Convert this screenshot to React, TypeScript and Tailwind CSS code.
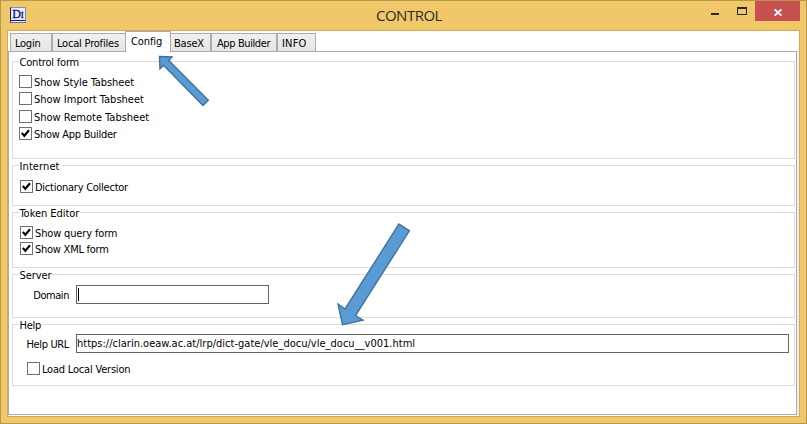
import type { ReactNode } from "react";

function Check({ label, checked = false, className = "", textClass = "" }: { label: string; checked?: boolean; className?: string; textClass?: string }) {
  return (
    <label className={`flex h-[13px] items-center gap-[2px] ${className}`}>
      <span className="h-[13px] w-[13px] shrink-0 border border-[#707070] bg-white">
        {checked && (
          <svg width="11" height="11" viewBox="0 0 11 11" className="block">
            <path d="M1.8 4.8 L4.3 7.8 L9 2.2" fill="none" stroke="#000" strokeWidth="2.1" />
          </svg>
        )}
      </span>
      <span className={`pt-[2px] whitespace-nowrap ${textClass}`}>{label}</span>
    </label>
  );
}

function Group({ title, className, titleClass = "", children }: { title: string; className: string; titleClass?: string; children: ReactNode }) {
  return (
    <section className={`relative shrink-0 border border-[#dcdcdc] ${className}`}>
      <h2 className={`absolute -top-[6px] left-[6px] bg-white pr-px pl-[0.5px] leading-[14px] whitespace-nowrap ${titleClass}`}>{title}</h2>
      {children}
    </section>
  );
}

function Tab({ label, className }: { label: string; className: string }) {
  return (
    <div className={`h-[18px] shrink-0 border border-b-0 border-[#acacac] bg-linear-to-b from-[#f0f0f0] to-[#e5e5e5] pt-[2px] leading-[15px] whitespace-nowrap ${className}`}>
      {label}
    </div>
  );
}

export default function App() {
  return (
    <div className="relative flex h-[424px] w-[807px] flex-col overflow-hidden border border-[#b6974f] bg-[#f0c869] px-[6px] pb-[6px] font-['DejaVu_Sans_Condensed','DejaVu_Sans',sans-serif] text-[11px] leading-[13px] tracking-[-0.1px] text-black">
      <header className="flex h-[29px] shrink-0 items-start">
        <div className="mt-[6px] ml-[3px] h-[16px] w-[16px] shrink-0 border border-[#8590c0] border-b-[#6670a8] border-l-[#18186c] bg-[#e9edfa]">
          <div className="h-[13px] border-b border-[#18186c] text-center font-['Liberation_Serif',serif] text-[12px] leading-[12px] font-medium tracking-[-0.2px] text-[#12126c] [-webkit-text-stroke:0.3px_#12126c]">
            D<span className="text-[9px]">I</span>
          </div>
        </div>
        <h1 className="ml-[350px] w-[70px] pt-[4px] font-['Open_Sans',sans-serif] text-[15px] leading-[21px] tracking-[-0.5px] text-[#2b2b2b]">CONTROL</h1>
        <div className="ml-auto flex h-[20px] items-start">
          <span className="mt-[12px] mr-[18px] h-[2px] w-[8px] bg-[#262626]" />
          <span className="mt-[6px] mr-[8px] h-[8px] w-[10px] border border-t-2 border-[#262626]" />
          <span className="flex h-[20px] w-[45px] items-center justify-center bg-[#c75050]">
            <svg width="8" height="7" viewBox="0 0 8 7" className="relative top-px">
              <path d="M0.6 0.3 L7.4 6.7 M7.4 0.3 L0.6 6.7" stroke="#fff" strokeWidth="1.7" />
            </svg>
          </span>
        </div>
      </header>
      <main className="flex min-h-0 flex-1 flex-col border border-[#d0aa58] bg-white">
        <nav className="flex h-[20px] shrink-0 items-end pl-[2px]">
          <Tab label="Login" className="w-[42px] pl-[4px] tracking-[-0.25px]" />
          <Tab label="Local Profiles" className="w-[73px] border-r-0 pl-[4px] tracking-[-0.2px]" />
          <div className="relative z-10 -mb-px h-[21px] w-[46px] shrink-0 border border-b-0 border-[#acacac] bg-white pt-[2px] pl-[5px] leading-[15px] tracking-[-0.1px]">Config</div>
          <Tab label="BaseX" className="w-[40px] border-l-0 pl-[3px] tracking-[-0.2px]" />
          <Tab label="App Builder" className="w-[66px] pl-[5px] tracking-[-0.4px]" />
          <Tab label="INFO" className="w-[39px] pl-[4px] tracking-[0.2px]" />
        </nav>
        <div className="mb-px flex min-h-0 flex-1 flex-col bg-[#f0f0f0] pr-[2px]">
          <div className="flex min-h-0 flex-1 flex-col border border-[#a9abae] bg-white pt-[9px] pr-px pl-[3px]">
            <Group title="Control form" className="h-[98px] pt-[13px] pl-[6px]" titleClass="tracking-[-0.2px]">
              <Check label="Show Style Tabsheet" />
              <Check label="Show Import Tabsheet" className="mt-[4px]" textClass="tracking-[0px]" />
              <Check label="Show Remote Tabsheet" className="mt-[5px]" textClass="tracking-[0px]" />
              <Check label="Show App Builder" checked className="mt-[4px]" textClass="tracking-[-0.3px]" />
            </Group>
            <Group title="Internet" className="mt-[6px] h-[41px] pt-[14px] pl-[7px]" titleClass="tracking-[0.1px]">
              <Check label="Dictionary Collector" checked textClass="tracking-[-0.25px]" />
            </Group>
            <Group title="Token Editor" className="mt-[6px] h-[56px] pt-[13px] pl-[7px]" titleClass="tracking-[-0.05px]">
              <Check label="Show query form" checked textClass="tracking-[-0.15px]" />
              <Check label="Show XML form" checked className="mt-[3px]" textClass="tracking-[-0.25px]" />
            </Group>
            <Group title="Server" className="mt-[6px] h-[44px] pt-[10px]" titleClass="tracking-[-0.1px]">
              <div className="flex h-[19px] items-center">
                <span className="w-[63px] pt-[2px] pr-[7px] text-right tracking-[-0.45px]">Domain</span>
                <div className="flex h-[19px] w-[193px] items-center border border-[#636363] pl-px">
                  <span className="h-[13px] w-px bg-black" />
                </div>
              </div>
            </Group>
            <Group title="Help" className="mt-[6px] h-[62px] pt-[9px]" titleClass="tracking-[-0.3px]">
              <div className="flex h-[19px] items-center">
                <span className="w-[63px] pt-px pr-[7px] text-right tracking-[-0.35px] whitespace-nowrap">Help URL</span>
                <div className="flex h-[19px] w-[713px] items-center border border-[#636363] tracking-[0.01px]">
                  https://clarin.oeaw.ac.at/lrp/dict-gate/vle_docu/vle_docu__v001.html
                </div>
              </div>
              <Check label="Load Local Version" className="mt-[9px] ml-[14px]" textClass="tracking-[-0.2px]" />
            </Group>
          </div>
        </div>
      </main>
      <svg className="pointer-events-none absolute -top-px -left-px z-20" width="807" height="424" viewBox="0 0 807 424" fill="#5b9bd5" stroke="#41719c" strokeWidth="1.4">
        <path d="M159.5 56.5 L172 57 L168.8 60.5 L208.3 100.2 L203 105.5 L163.5 65.2 L160 68.8 Z" />
        <path d="M399 224 L409.4 230.8 L355.5 315.6 L363 320.2 L342.5 324.7 L338 304 L345 309 Z" />
      </svg>
    </div>
  );
}
